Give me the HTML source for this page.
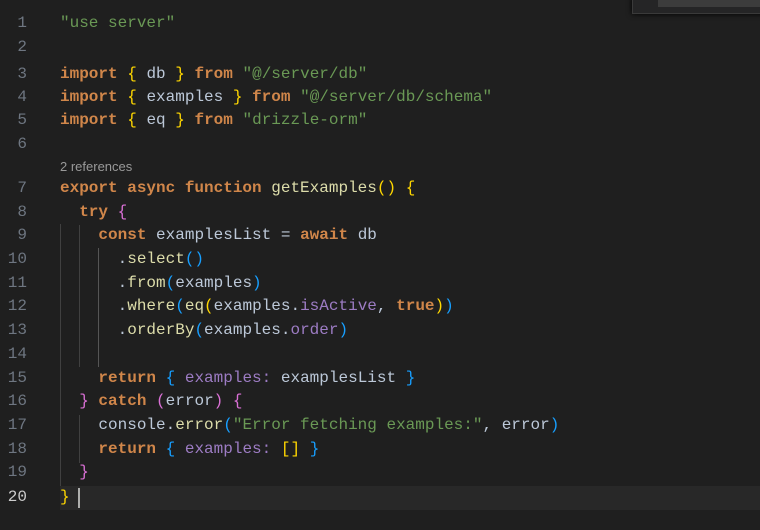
<!DOCTYPE html>
<html><head><style>
body{margin:0;width:760px;height:530px;background:#1f1f1f;overflow:hidden;position:relative;font-family:"Liberation Mono",monospace;font-size:16px}
#w{position:absolute;left:0;top:2px;width:760px;height:528px}
.ln{position:absolute;left:0;width:27px;text-align:right;color:#6e7681;line-height:23.7px;height:23.7px}
.c{position:absolute;left:60px;white-space:pre;line-height:23.7px;height:23.7px;color:#9cdcfe}
.k{color:#d0864a;font-weight:bold}
.s{color:#6a9955}
.f{color:#dcdcaa}
.p{color:#9d7cc4}
.v{color:#bcc8d8}
.y{color:#ffd700}.m{color:#da70d6}.b{color:#179fff}
.g{position:absolute;width:1px;background:#404040}
.cur{position:absolute;left:60px;right:0;top:484px;height:23.7px;background:#282828}
</style></head><body>
<div style="position:absolute;left:632px;top:-4px;width:140px;height:16px;background:#252526;border:1px solid #3a3a3a;box-shadow:0 0 6px #000"></div>
<div style="position:absolute;left:658px;top:0;width:110px;height:7px;background:#3c3c3c"></div>
<div id="w">
<div class="cur"></div>
<div class="g" style="left:60px;top:222px;height:262px"></div>
<div class="g" style="left:79px;top:223px;height:142px"></div>
<div class="g" style="left:79px;top:413px;height:48px"></div>
<div class="g" style="left:98px;top:246px;height:119px;background:#555"></div>

<div class="ln" style="top:10px">1</div><div class="c s" style="top:10px">"use server"</div>
<div class="ln" style="top:34px">2</div>
<div class="ln" style="top:61px">3</div><div class="c" style="top:61px"><span class="k">import</span> <span class="y">{</span> <span class="v">db</span> <span class="y">}</span> <span class="k">from</span> <span class="s">"@/server/db"</span></div>
<div class="ln" style="top:84px">4</div><div class="c" style="top:84px"><span class="k">import</span> <span class="y">{</span> <span class="v">examples</span> <span class="y">}</span> <span class="k">from</span> <span class="s">"@/server/db/schema"</span></div>
<div class="ln" style="top:107px">5</div><div class="c" style="top:107px"><span class="k">import</span> <span class="y">{</span> <span class="v">eq</span> <span class="y">}</span> <span class="k">from</span> <span class="s">"drizzle-orm"</span></div>
<div class="ln" style="top:131px">6</div>
<div style="position:absolute;left:60px;top:157px;font-family:'Liberation Sans',sans-serif;font-size:13px;color:#999">2 references</div>
<div class="ln" style="top:175px">7</div><div class="c" style="top:175px"><span class="k">export async function</span> <span class="f">getExamples</span><span class="y">()</span> <span class="y">{</span></div>
<div class="ln" style="top:199px">8</div><div class="c" style="top:199px">  <span class="k">try</span> <span class="m">{</span></div>
<div class="ln" style="top:222px">9</div><div class="c" style="top:222px">    <span class="k">const</span> <span class="v">examplesList</span> <span class="v">=</span> <span class="k">await</span> <span class="v">db</span></div>
<div class="ln" style="top:246px">10</div><div class="c" style="top:246px">      <span class="v">.</span><span class="f">select</span><span class="b">()</span></div>
<div class="ln" style="top:270px">11</div><div class="c" style="top:270px">      <span class="v">.</span><span class="f">from</span><span class="b">(</span><span class="v">examples</span><span class="b">)</span></div>
<div class="ln" style="top:293px">12</div><div class="c" style="top:293px">      <span class="v">.</span><span class="f">where</span><span class="b">(</span><span class="f">eq</span><span class="y">(</span><span class="v">examples.</span><span class="p">isActive</span><span class="v">,</span> <span class="k">true</span><span class="y">)</span><span class="b">)</span></div>
<div class="ln" style="top:317px">13</div><div class="c" style="top:317px">      <span class="v">.</span><span class="f">orderBy</span><span class="b">(</span><span class="v">examples.</span><span class="p">order</span><span class="b">)</span></div>
<div class="ln" style="top:341px">14</div>
<div class="ln" style="top:365px">15</div><div class="c" style="top:365px">    <span class="k">return</span> <span class="b">{</span> <span class="p">examples:</span> <span class="v">examplesList</span> <span class="b">}</span></div>
<div class="ln" style="top:388px">16</div><div class="c" style="top:388px">  <span class="m">}</span> <span class="k">catch</span> <span class="m">(</span><span class="v">error</span><span class="m">)</span> <span class="m">{</span></div>
<div class="ln" style="top:412px">17</div><div class="c" style="top:412px">    <span class="v">console.</span><span class="f">error</span><span class="b">(</span><span class="s">"Error fetching examples:"</span><span class="v">,</span> <span class="v">error</span><span class="b">)</span></div>
<div class="ln" style="top:436px">18</div><div class="c" style="top:436px">    <span class="k">return</span> <span class="b">{</span> <span class="p">examples:</span> <span class="y">[]</span> <span class="b">}</span></div>
<div class="ln" style="top:459px">19</div><div class="c" style="top:459px">  <span class="m">}</span></div>
<div class="ln" style="top:484px;color:#ccc">20</div><div class="c" style="top:484px"><span class="y">}</span></div>
<div style="position:absolute;left:78px;top:486px;width:2px;height:20px;background:#aeafad"></div>
</div>
</body></html>
